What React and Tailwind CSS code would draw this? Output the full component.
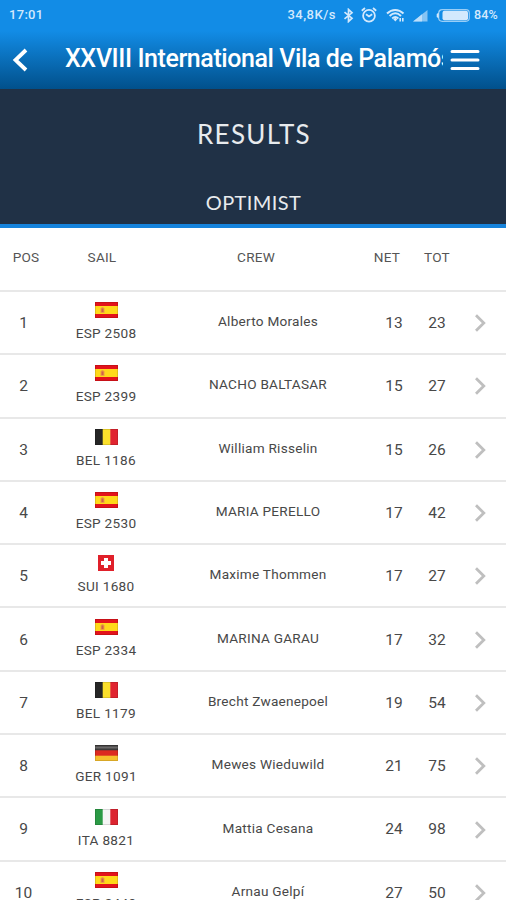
const RESULTS = [
  { pos: 1, country: 'ESP', sail: '2508', crew: 'Alberto Morales', net: 13, tot: 23 },
  { pos: 2, country: 'ESP', sail: '2399', crew: 'NACHO BALTASAR', net: 15, tot: 27 },
  { pos: 3, country: 'BEL', sail: '1186', crew: 'William Risselin', net: 15, tot: 26 },
  { pos: 4, country: 'ESP', sail: '2530', crew: 'MARIA PERELLO', net: 17, tot: 42 },
  { pos: 5, country: 'SUI', sail: '1680', crew: 'Maxime Thommen', net: 17, tot: 27 },
  { pos: 6, country: 'ESP', sail: '2334', crew: 'MARINA GARAU', net: 17, tot: 32 },
  { pos: 7, country: 'BEL', sail: '1179', crew: 'Brecht Zwaenepoel', net: 19, tot: 54 },
  { pos: 8, country: 'GER', sail: '1091', crew: 'Mewes Wieduwild', net: 21, tot: 75 },
  { pos: 9, country: 'ITA', sail: '8821', crew: 'Mattia Cesana', net: 24, tot: 98 },
  { pos: 10, country: 'ESP', sail: '2449', crew: 'Arnau Gelpí', net: 27, tot: 50 },
];

const Flag = ({ country }) => {
  if (country === 'SUI') {
    return (
      <svg width="16" height="16" viewBox="0 0 16 16">
        <rect width="16" height="16" fill="#e0202a" />
        <path d="M6 3h4v3h3v4h-3v3H6v-3H3V6h3z" fill="#fff" />
      </svg>
    );
  }
  return (
    <svg width="23" height="16" viewBox="0 0 23 16">
      {country === 'ESP' && (
        <>
          <rect width="23" height="16" fill="#e3131b" />
          <rect y="4" width="23" height="8" fill="#ffd91a" />
          <path d="M5.5 6h1v-1h2v1h1v5h-4z" fill="#eda040" />
          <path d="M6.5 6.5h2v3.5h-2z" fill="#d0604a" />
        </>
      )}
      {country === 'BEL' && (
        <>
          <rect width="8" height="16" fill="#262626" />
          <rect x="7.7" width="8" height="16" fill="#fbe02c" />
          <rect x="15.3" width="7.7" height="16" fill="#e02430" />
        </>
      )}
      {country === 'GER' && (
        <>
          <rect width="23" height="6" fill="#3c3a3a" />
          <rect y="1.5" width="23" height="2" fill="#6a6868" />
          <rect y="5.3" width="23" height="5.7" fill="#dc2a20" />
          <rect y="10.7" width="23" height="5.3" fill="#f6bf2c" />
        </>
      )}
      {country === 'ITA' && (
        <>
          <rect width="8" height="16" fill="#2b9a45" />
          <rect x="7.7" width="8" height="16" fill="#f5f5f5" />
          <rect x="15.3" width="7.7" height="16" fill="#dc2430" />
        </>
      )}
      <rect x="0.5" y="0.5" width="22" height="15" fill="none" stroke="#000" strokeOpacity="0.12" />
    </svg>
  );
};

const StatusBar = () => (
  <div className="h-[30px] flex items-center justify-between pl-[9px] pr-[8px] text-[#d3e9fd] text-[13px] font-medium">
    <span className="tracking-[0.3px]">17:01</span>
    <div className="flex items-center">
      <span className="tracking-[0.5px] mr-[7px]">34,8K/s</span>
      {/* bluetooth */}
      <svg className="mr-[7px]" width="11" height="15" viewBox="0 0 11 15" fill="none" stroke="currentColor" strokeWidth="1.7">
        <path d="M1.5 4.2l7.5 6-3.5 3.3v-12L9 4.8l-7.5 6" />
      </svg>
      {/* alarm */}
      <svg className="mr-[9px]" width="16" height="16" viewBox="0 0 16 16" fill="none" stroke="currentColor" strokeWidth="1.8">
        <circle cx="8" cy="8.7" r="5.9" />
        <path d="M.8 3.8L4 1M15.2 3.8L12 1M5 7.2l3 2.3 3.2-2.3" />
      </svg>
      {/* wifi */}
      <svg className="mr-[7px]" width="19" height="15" viewBox="0 0 19 15" fill="none" stroke="currentColor" strokeWidth="2">
        <path d="M1 5.4C6 .7 12.5.7 17.5 5.4M3.6 7.9c3.6-3.3 7.9-3.3 11.4 0M6.2 10.4c2-1.8 4.2-1.8 6.2 0" />
        <path d="M7.3 11.3L9.3 9.5l2 1.8-2 2.3z" fill="currentColor" stroke="none" />
        <path d="M14.2 10v3.5M16.8 10v3.5" strokeWidth="1.6" />
      </svg>
      {/* signal */}
      <svg className="mr-[8px]" width="16" height="13" viewBox="0 0 16 13" fill="currentColor">
        <path d="M1 12.5L15.5 1v11.5z" opacity="0.6" />
        <path d="M1 12.5L10 5.3v7.2z" opacity="0.7" />
      </svg>
      {/* battery */}
      <svg className="mr-[4px]" width="34" height="13" viewBox="0 0 34 13">
        <rect x="2.7" y="0.7" width="30.6" height="11.6" rx="3.5" fill="none" stroke="currentColor" strokeWidth="1.2" strokeOpacity="0.7" />
        <path d="M2.7 3.5L.7 5v3l2 1.5z" fill="currentColor" />
        <rect x="6.5" y="1.8" width="25.5" height="9.4" rx="2" fill="currentColor" />
      </svg>
      <span className="text-[12.5px] tracking-[0.2px]">84%</span>
    </div>
  </div>
);

const ResultRow = ({ row }) => (
  <div className="h-[63.3px] shrink-0 grid grid-cols-[46px_120px_204px_48px_38px_48px] items-center text-center border-b-2 border-[#e8e8e8] text-[#484848]">
    <span className="text-[15.5px] pt-[2px] pl-px">{row.pos}</span>
    <div className="flex flex-col items-center text-[13.6px] leading-4 pb-[2px]">
      <Flag country={row.country} />
      <span className="mt-[7px] tracking-[0.3px]">{row.country} {row.sail}</span>
    </div>
    <span className="text-[13.6px] leading-4 pb-[3px] tracking-[0.25px]">{row.crew}</span>
    <span className="text-[15.5px] pt-[2px]">{row.net}</span>
    <span className="text-[15.5px] pt-[2px]">{row.tot}</span>
    <svg className="justify-self-center mt-px" width="14" height="20" viewBox="0 0 14 20" fill="none" stroke="#bfbfbf" strokeWidth="2.8">
      <path d="M3 2.2L10.8 10 3 17.8" />
    </svg>
  </div>
);

const App = () => (
  <div className="w-[506px] h-[900px] overflow-hidden flex flex-col bg-white font-['Roboto',sans-serif]">
    {/* Header */}
    <header className="h-[89px] shrink-0 bg-[linear-gradient(#128ce6_0px,#128ce6_31px,#01508b_89px)]">
      <StatusBar />
      <div className="h-[58px] flex items-center">
        <svg className="ml-[11px] mt-[2px]" width="17" height="24" viewBox="0 0 17 24" fill="none" stroke="#fff" strokeWidth="3.8">
          <path d="M15 2L4.5 12 15 22" />
        </svg>
        <h1 className="ml-[37px] w-[378px] overflow-hidden whitespace-nowrap text-[25px] tracking-[-0.42px] font-medium text-white">
          XXVIII International Vila de Palamós
        </h1>
        <svg className="ml-[7px] mt-[2px]" width="30" height="22" viewBox="0 0 30 22" stroke="#fff" strokeWidth="3" strokeLinecap="round">
          <path d="M2 2.5h26M2 11h26M2 19.5h26" />
        </svg>
      </div>
    </header>

    {/* Title */}
    <div className="h-[139px] shrink-0 bg-[#203146] border-b-4 border-[#1683db] text-center text-[#e8ebee] font-['Lato',sans-serif]">
      <h2 className="mt-[29px] text-[26px] leading-8 tracking-[1.3px] pl-[2px]">RESULTS</h2>
      <h3 className="mt-[40px] text-[20px] leading-6 tracking-[0.4px] pl-px">OPTIMIST</h3>
    </div>

    {/* Column names */}
    <div className="h-[64px] shrink-0 grid grid-cols-[52px_100px_208px_54px_46px] items-center text-center text-[13.6px] tracking-[0.2px] text-[#555] border-b-2 border-[#e8e8e8] pb-[3px]">
      <span>POS</span>
      <span>SAIL</span>
      <span>CREW</span>
      <span>NET</span>
      <span>TOT</span>
    </div>

    {RESULTS.map((row) => <ResultRow key={row.pos} row={row} />)}
  </div>
);

export default App;
